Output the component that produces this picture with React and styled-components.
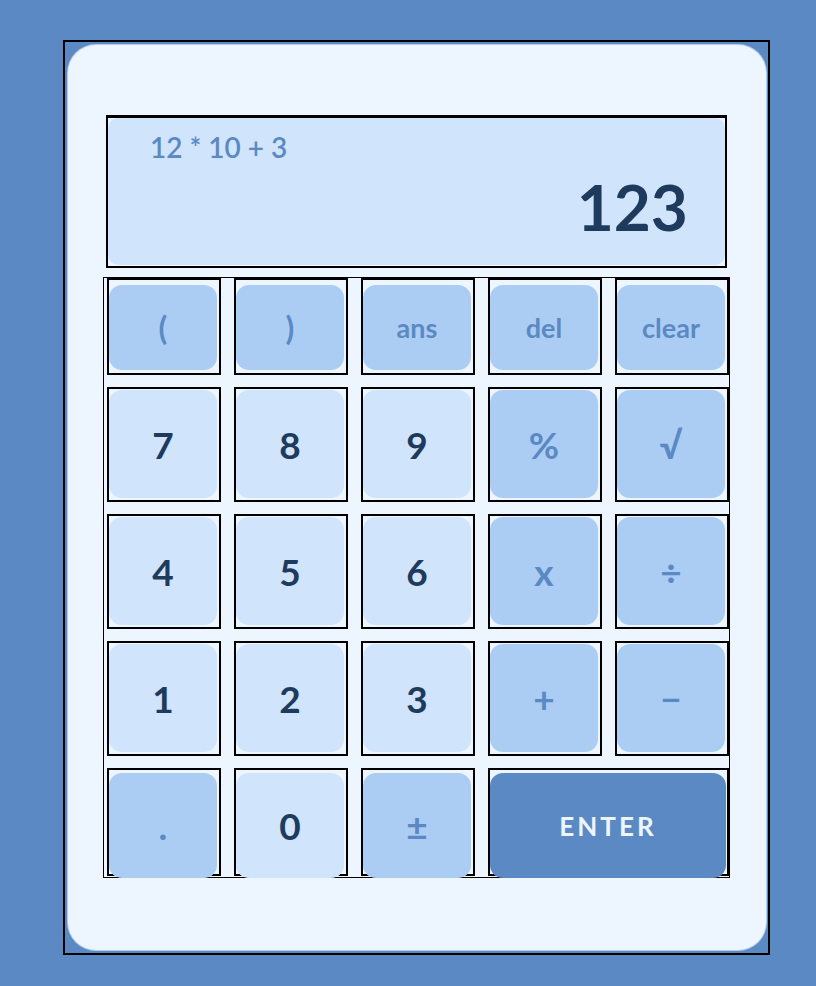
import React from "react";
import styled, { createGlobalStyle } from "styled-components";

const GlobalStyle = createGlobalStyle`
  html, body {
    margin: 0;
    padding: 0;
    background: #5b89c3;
  }
  body {
    min-height: 986px;
    font-family: "Lato", "Open Sans", sans-serif;
  }
  * { box-sizing: border-box; }
`;

const Frame = styled.div`
  margin: 40px 0 0 63px;
  width: 707px;
  height: 915px;
  border: 2px solid #000;
  padding: 3px 2px 3px 3px;
`;

const Panel = styled.div`
  height: 100%;
  background: #edf5ff;
  border-radius: 28px;
  box-shadow: 0 0 0 1px #b3cceb;
  padding: 70px 0 0 38px;
  display: flex;
  flex-direction: column;
`;

const DisplayFrame = styled.div`
  width: 621px;
  height: 153px;
  border: 2px solid #000;
  border-top-width: 3px;
  padding-bottom: 1px;
`;

const Screen = styled.div`
  height: 100%;
  background: #d0e4fb;
  border-radius: 10px;
  display: flex;
  flex-direction: column;
  padding: 13px 37px 0 42px;
`;

const Expression = styled.div`
  font-size: 28px;
  font-weight: 600;
  color: #5b89c3;
  line-height: 32px;
`;

const Result = styled.div`
  align-self: flex-end;
  font-size: 64px;
  font-weight: 700;
  color: #1e3a5c;
  line-height: 78px;
  margin-top: 5px;
`;

const Keypad = styled.div`
  margin: 9px 0 0 -3px;
  width: 627px;
  border: 1px solid #000;
  padding: 0 0 1px 3px;
  display: grid;
  grid-template-columns: repeat(5, 114px);
  grid-template-rows: 97px 115px 115px 115px 108px;
  column-gap: 13px;
  row-gap: 12px;
`;

const Cell = styled.div`
  border: 2px solid #000;
  padding: ${(p) => p.$pad}px 0 0 0;
  grid-column: span ${(p) => p.$span || 1};
  display: flex;
  align-items: flex-start;
`;

const Key = styled.button`
  width: ${(p) => (p.$wide ? 236 : 108)}px;
  height: ${(p) => p.$h}px;
  border: none;
  border-radius: 13px;
  display: flex;
  align-items: center;
  justify-content: center;
  font-family: "Lato", "Open Sans", sans-serif;
  font-weight: 700;
  padding: 0;
  background: ${(p) =>
    p.$kind === "num" ? "#d0e4fb" : p.$kind === "enter" ? "#5b89c3" : "#abcdf4"};
  color: ${(p) =>
    p.$kind === "num" ? "#1e3a5c" : p.$kind === "enter" ? "#edf5ff" : "#5b89c3"};
  font-size: ${(p) => p.$size}px;
  letter-spacing: ${(p) => (p.$kind === "enter" ? "3px" : "0")};
`;

const rows = [
  {
    h: 85,
    pad: 5,
    keys: [
      { t: "(", k: "op", s: 32 },
      { t: ")", k: "op", s: 32 },
      { t: "ans", k: "op", s: 27 },
      { t: "del", k: "op", s: 27 },
      { t: "clear", k: "op", s: 27 },
    ],
  },
  {
    h: 108,
    pad: 1,
    keys: [
      { t: "7", k: "num", s: 37 },
      { t: "8", k: "num", s: 37 },
      { t: "9", k: "num", s: 37 },
      { t: "%", k: "op", s: 37 },
      { t: "√", k: "op", s: 37 },
    ],
  },
  {
    h: 108,
    pad: 1,
    keys: [
      { t: "4", k: "num", s: 37 },
      { t: "5", k: "num", s: 37 },
      { t: "6", k: "num", s: 37 },
      { t: "x", k: "op", s: 37 },
      { t: "÷", k: "op", s: 37 },
    ],
  },
  {
    h: 108,
    pad: 1,
    keys: [
      { t: "1", k: "num", s: 37 },
      { t: "2", k: "num", s: 37 },
      { t: "3", k: "num", s: 37 },
      { t: "+", k: "op", s: 37 },
      { t: "−", k: "op", s: 37 },
    ],
  },
  {
    h: 105,
    pad: 3,
    keys: [
      { t: ".", k: "op", s: 37 },
      { t: "0", k: "num", s: 37 },
      { t: "±", k: "op", s: 37 },
      { t: "ENTER", k: "enter", s: 26, span: 2 },
    ],
  },
];

export default function App() {
  return (
    <>
      <GlobalStyle />
      <Frame>
        <Panel>
          <DisplayFrame>
            <Screen>
              <Expression>12 * 10 + 3</Expression>
              <Result>123</Result>
            </Screen>
          </DisplayFrame>
          <Keypad>
            {rows.map((row, ri) =>
              row.keys.map((key, ki) => (
                <Cell key={`${ri}-${ki}`} $pad={row.pad} $span={key.span}>
                  <Key
                    $kind={key.k}
                    $h={row.h}
                    $size={key.s}
                    $wide={key.span === 2}
                  >
                    {key.t}
                  </Key>
                </Cell>
              ))
            )}
          </Keypad>
        </Panel>
      </Frame>
    </>
  );
}
